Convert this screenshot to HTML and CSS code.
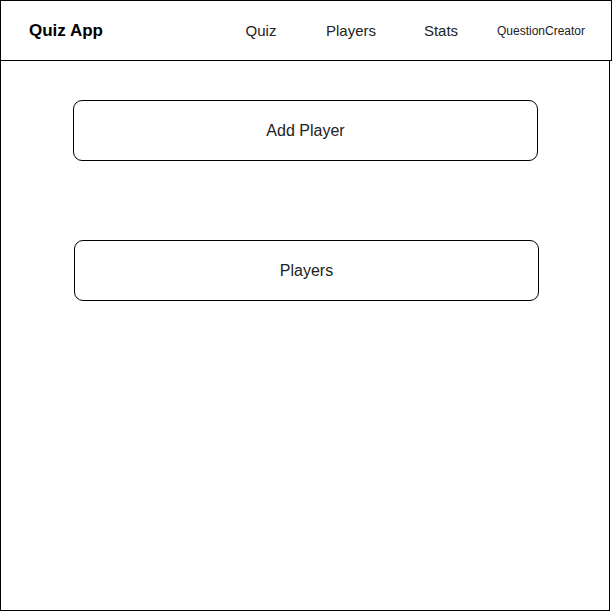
FILE: index.html
```html
<!DOCTYPE html>
<html>
<head>
<meta charset="utf-8">
<link rel="stylesheet" href="styles.css">
</head>
<body>
<div class="frame">
  <header class="topbar">
    <div class="brand">Quiz App</div>
    <nav class="nav">
      <span class="nav-item">Quiz</span>
      <span class="nav-item">Players</span>
      <span class="nav-item">Stats</span>
      <span class="nav-item nav-small">QuestionCreator</span>
    </nav>
  </header>
  <main class="content">
    <div class="card card-add">Add Player</div>
    <div class="card card-players">Players</div>
  </main>
</div>
</body>
</html>
```
FILE: styles.css
```css
* { box-sizing: border-box; }
html, body { margin: 0; padding: 0; background: #fff; }
body { font-family: "Liberation Sans", Arial, sans-serif; color: #1e1e1e; }
.frame { width: 612px; }
.topbar {
  width: 612px;
  height: 61px;
  border: 1px solid #000;
  display: flex;
  align-items: center;
}
.brand {
  width: 130px;
  text-align: center;
  font-weight: bold;
  font-size: 17px;
  color: #000;
}
.nav { display: flex; align-items: center; margin-left: 85px; }
.nav-item { width: 90px; text-align: center; font-size: 15px; color: #222; }
.nav-small { font-size: 12px; margin-left: 10px; }
.content {
  width: 610px;
  height: 550px;
  border: 1px solid #000;
  border-top: none;
  padding-top: 39px;
}
.card {
  width: 465px;
  height: 61px;
  border: 1px solid #000;
  border-radius: 9px;
  display: flex;
  align-items: center;
  justify-content: center;
  font-size: 16px;
  color: #222;
}
.card-add { margin-left: 72px; }
.card-players { margin-left: 73px; margin-top: 79px; }
```
